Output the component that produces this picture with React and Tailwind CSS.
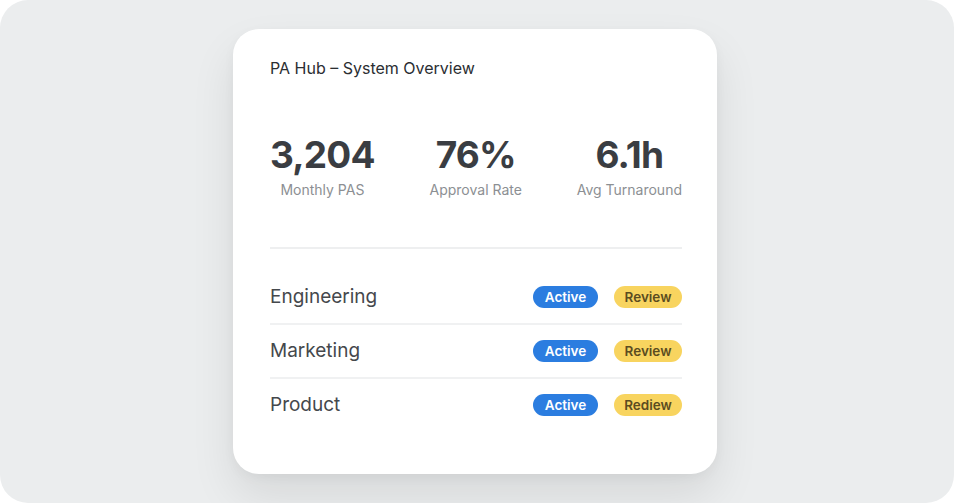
const STATS = [
  { value: '3,204', label: 'Monthly PAS' },
  { value: '76%', label: 'Approval Rate' },
  { value: '6.1h', label: 'Avg Turnaround' },
];

const TEAMS = [
  { name: 'Engineering', second: 'Review' },
  { name: 'Marketing', second: 'Review' },
  { name: 'Product', second: 'Rediew' },
];

function Badge({ kind, children }) {
  const cls = kind === 'blue'
    ? 'bg-[#2b7de0] text-white w-[65px]'
    : 'bg-[#f8d45f] text-[#5b4c21] w-[68px]';
  return (
    <span className={`h-[22px] rounded-full flex items-center justify-center text-[13.5px] font-semibold ${cls}`}>
      {children}
    </span>
  );
}

export default function App() {
  return (
    <div className="w-[956px] h-[503px] bg-white" style={{ fontFamily: 'Inter, "Noto Sans", sans-serif' }}>
      <div className="w-[954px] h-full rounded-[28px] bg-[#ebedee] flex items-center justify-center pr-[4px]">
        <div className="w-[484px] h-[445px] rounded-[26px] bg-white shadow-[0_22px_45px_rgba(0,0,0,0.09),0_4px_12px_rgba(0,0,0,0.04)] pt-[29px] pl-[37px] pr-[35px]">
          <h1 className="text-[16px] leading-5 font-normal text-[#2b2e32]">PA Hub – System Overview</h1>

          <div className="mt-[57px] flex justify-between">
            {STATS.map(s => (
              <div key={s.label} className="flex flex-col items-center">
                <span className="text-[37px] leading-10 font-bold text-[#3a3d42] tracking-[-0.8px]">{s.value}</span>
                <span className="mt-[5px] text-[14px] leading-5 text-[#8c8f93]">{s.label}</span>
              </div>
            ))}
          </div>

          <div className="mt-[47px] h-[2px] bg-[#eeeff0]" />

          <div className="mt-[22px]">
            {TEAMS.map((t, i) => (
              <div key={t.name}>
                {i > 0 && <div className="h-[2px] bg-[#f0f1f2]" />}
                <div className="h-[52px] flex items-center justify-between">
                  <span className="text-[19px] text-[#45484c]">{t.name}</span>
                  <div className="flex items-center gap-4">
                    <Badge kind="blue">Active</Badge>
                    <Badge kind="yellow">{t.second}</Badge>
                  </div>
                </div>
              </div>
            ))}
          </div>
        </div>
      </div>
    </div>
  );
}
